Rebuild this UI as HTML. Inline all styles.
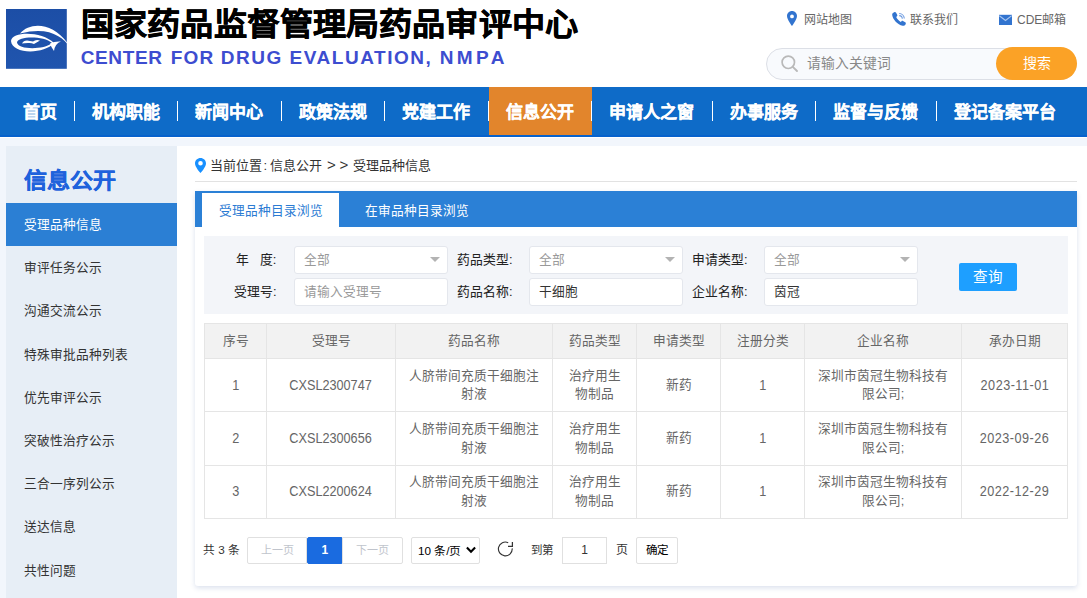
<!DOCTYPE html>
<html lang="zh-CN">
<head>
<meta charset="utf-8">
<style>
*{margin:0;padding:0;box-sizing:border-box}
html,body{width:1087px;height:598px;overflow:hidden;background:#fff;font-family:"Liberation Sans",sans-serif;color:#333}
.abs{position:absolute}
#hdr{position:absolute;left:0;top:0;width:1087px;height:87px;background:#fff}
#logo{position:absolute;left:6px;top:9px;width:61px;height:60px;background:#1d4fa6}
#t1{position:absolute;left:81px;top:5.8px;transform-origin:0 0;transform:scale(1.004,0.94);font-size:33px;font-weight:bold;color:#000;-webkit-text-stroke:0.6px #000;white-space:nowrap;line-height:40px}
.t2{position:absolute;top:47px;font-size:19px;font-weight:bold;color:#3d4dd0;white-space:nowrap;line-height:22px}
.tl{position:absolute;top:12px;font-size:12px;color:#666;line-height:16px;white-space:nowrap}
#search{position:absolute;left:766px;top:48px;width:311px;height:32px;border:1px solid #dcdfe6;border-radius:16px;background:#f8fafd}
#sbtn{position:absolute;left:996px;top:47px;width:81px;height:33px;border-radius:17px;background:#fba226;color:#fff;font-size:14px;line-height:33px;text-align:center}
#nav{position:absolute;left:0;top:87px;width:1087px;height:50px;background:#0e6bc8;border-bottom:2px solid #0762cc}
#nav .it{position:absolute;top:0;height:48px;line-height:52px;color:#fff;font-size:17px;font-weight:bold;padding:0 17px;white-space:nowrap;-webkit-text-stroke:0.2px #fff}
#nav .sep{position:absolute;top:14px;width:1px;height:20px;background:#fff}
#nav .act{background:#e2852c}
#bg{position:absolute;left:0;top:138px;width:1087px;height:460px;background:#f2f6fc;border-top:0}
#side{position:absolute;left:6px;top:146px;width:171px;height:452px;background:#e7eef6}
#side h2{position:absolute;left:18px;top:165px;font-size:23px;color:#2366d8;font-weight:bold;line-height:30px}
.si{position:absolute;left:6px;width:171px;height:43px;font-size:12.7px;color:#333;line-height:45px;padding-left:18px;white-space:nowrap}
.si.on{background:#2b7fd4;color:#fff}
#main{position:absolute;left:177px;top:146px;width:910px;height:452px;background:#fff}
#card{position:absolute;left:195px;top:191px;width:882px;height:395px;background:#fff;border-radius:3px;box-shadow:0 2px 5px rgba(40,80,150,.17)}
.lab{position:absolute;font-size:12.8px;color:#222;line-height:28px;white-space:nowrap;-webkit-text-stroke:0.05px #222}
.inp{position:absolute;width:153.5px;height:28.7px;background:#fff;border:1px solid #e4e7ed;border-radius:3px;font-size:12.7px;color:#333;line-height:27px;padding-left:9px;white-space:nowrap}
.inp.sel,.inp.ph{color:#999}
.inp.sel:after{content:"";position:absolute;left:134.5px;top:10.5px;width:0;height:0;border-left:5px solid transparent;border-right:5px solid transparent;border-top:5px solid #b3b3b3}
#tb{position:absolute;left:204px;top:323px;width:863px;border-collapse:collapse;table-layout:fixed}
#tb td{border:1px solid #e5e5e5;text-align:center;font-size:12.7px;color:#666;height:53.2px;line-height:18.7px;padding:0 10px}
#tb tr.hd td{height:35.3px;background:#f2f2f2}
.pg{font-size:12px;color:#333;line-height:18px;white-space:nowrap}
.pbox{top:537px;height:27px;border:1px solid #e0e0e0;font-size:12px;line-height:25px;text-align:center;white-space:nowrap;background:#fff}
.bc{position:absolute;top:157px;font-size:13px;color:#333;line-height:18px;white-space:nowrap}
.lt{display:inline-block;font-size:14px;transform:scaleX(.905)}
</style>
</head>
<body>
<div id="hdr">
  <svg class="abs" style="left:0;top:0" width="80" height="80" viewBox="0 0 80 80">
<defs><linearGradient id="lg" x1="0" y1="0" x2="0" y2="1"><stop offset="0" stop-color="#1c4ea6"/><stop offset="1" stop-color="#2055ae"/></linearGradient></defs>
<rect x="6" y="9" width="60.8" height="59.8" fill="url(#lg)"/>
<path d="M20,33.5 C30,22 52,22 67.5,43 L70,47 C62,36 48,26 20,33.5 Z" fill="#fff"/>
<path fill="#fff" fill-rule="evenodd" d="M11,41 C12,31 42,31 54,43 C44,54.5 12,54.5 11,41 Z M17,42.5 C18,35.8 44,35.8 52,43 C44,50 18,50 17,42.5 Z"/>
<path fill="#fff" d="M50,43.5 Q55,41 61,41.5 Q55,43.5 54,51 Q51,47 50,43.5 Z"/>
<path fill="#fff" d="M22,43.5 Q24,39.5 30,41 L33,41.5 Q36,39 40,40.5 Q37,42 34,44 Q31,42.5 28,43 Q24,43 22,43.5 Z"/>
</svg>
  <div id="t1">国家药品监督管理局药品审评中心</div>
  <div class="t2" style="left:80.7px;letter-spacing:.64px">CENTER</div><div class="t2" style="left:170.8px;letter-spacing:1.2px">FOR</div><div class="t2" style="left:220.8px;letter-spacing:1.53px">DRUG</div><div class="t2" style="left:289.5px;letter-spacing:1.54px">EVALUATION,</div><div class="t2" style="left:439.7px;letter-spacing:3.4px">NMPA</div>
<svg class="abs" style="left:786px;top:10px" width="12" height="17" viewBox="0 0 12 17"><path d="M6 1C3.2 1 1 3.2 1 6c0 3.6 5 10 5 10s5-6.4 5-10C11 3.2 8.8 1 6 1zm0 7.3a1.9 1.9 0 1 1 0-3.8 1.9 1.9 0 0 1 0 3.8z" fill="#3274cf"/></svg>
<svg class="abs" style="left:891px;top:11px" width="16" height="16" viewBox="0 0 16 16"><path d="M3.2 1.2 C2 1.6 1 2.6 1.2 4 C1.8 8.6 6.5 13.6 11.6 14.8 C12.8 15 14 14.3 14.6 13.2 L14.8 12.6 C15 12 14.7 11.5 14.2 11.2 L12 10 C11.5 9.7 10.9 9.8 10.5 10.2 L9.8 11 C8 10 6 7.8 5.2 6 L6 5.3 C6.4 4.9 6.5 4.3 6.2 3.8 L5.1 1.7 C4.8 1.2 4.2 1 3.6 1.1 Z" fill="#3274cf"/><path d="M8.2 2.5 A5.3 5.3 0 0 1 13.3 7.6" stroke="#6d9be0" stroke-width="1.1" fill="none"/><path d="M8.2 4.6 A3.2 3.2 0 0 1 11.3 7.8" stroke="#6d9be0" stroke-width="1.1" fill="none"/></svg>
<svg class="abs" style="left:999px;top:14px" width="14" height="12" viewBox="0 0 14 12"><rect x="0" y="0.8" width="13" height="10.2" fill="#3274cf"/><path d="M0.3 1.6 L6.5 6.4 L12.7 1.6" stroke="#a9c6f0" stroke-width="1.2" fill="none"/></svg>
  <div class="tl" style="left:804px">网站地图</div>
  <div class="tl" style="left:910px">联系我们</div>
  <div class="tl" style="left:1017px">CDE邮箱</div>
  <div id="search"></div>
  <svg class="abs" style="left:780px;top:54px" width="19" height="19" viewBox="0 0 19 19"><circle cx="8.3" cy="8.3" r="6.2" stroke="#b9b9b9" stroke-width="1.7" fill="none"/><path d="M12.8 12.8 L17 17" stroke="#b9b9b9" stroke-width="1.9" stroke-linecap="round"/></svg>
<div class="abs" style="left:806.5px;top:55px;font-size:13.8px;color:#888;line-height:18px">请输入关键词</div>
  <div id="sbtn">搜索</div>
</div>
<div id="nav">
  <div class="it" style="left:6px">首页</div>
  <div class="sep" style="left:74px"></div>
  <div class="it" style="left:75px">机构职能</div>
  <div class="sep" style="left:177px"></div>
  <div class="it" style="left:178px">新闻中心</div>
  <div class="sep" style="left:281px"></div>
  <div class="it" style="left:282px">政策法规</div>
  <div class="sep" style="left:384px"></div>
  <div class="it" style="left:385px">党建工作</div>
  <div class="sep" style="left:488px"></div>
  <div class="it act" style="left:489px;padding-right:18px">信息公开</div>
  <div class="sep" style="left:591px"></div>
  <div class="it" style="left:592px">申请人之窗</div>
  <div class="sep" style="left:712px"></div>
  <div class="it" style="left:713px">办事服务</div>
  <div class="sep" style="left:815px"></div>
  <div class="it" style="left:816px">监督与反馈</div>
  <div class="sep" style="left:936px"></div>
  <div class="it" style="left:937px">登记备案平台</div>
</div>
<div id="bg"></div>
<div id="side"></div>
<div class="abs" style="left:24px;top:165.7px;font-size:23px;color:#1f62dc;font-weight:bold;line-height:30px;-webkit-text-stroke:0.4px #1f62dc;transform:scaleY(.92)">信息公开</div>
<div class="si on" style="top:203px">受理品种信息</div>
<div class="si" style="top:246.2px">审评任务公示</div>
<div class="si" style="top:289.4px">沟通交流公示</div>
<div class="si" style="top:332.6px">特殊审批品种列表</div>
<div class="si" style="top:375.8px">优先审评公示</div>
<div class="si" style="top:419px">突破性治疗公示</div>
<div class="si" style="top:462.2px">三合一序列公示</div>
<div class="si" style="top:505.4px">送达信息</div>
<div class="si" style="top:548.6px">共性问题</div>

<div id="main"></div>
<svg class="abs" style="left:195px;top:158px" width="11" height="15" viewBox="0 0 11 15"><path d="M5.5 0C2.5 0 0 2.4 0 5.4c0 3.6 5.5 9.6 5.5 9.6S11 9 11 5.4C11 2.4 8.5 0 5.5 0zm0 7.6a2.3 2.3 0 1 1 0-4.6 2.3 2.3 0 0 1 0 4.6z" fill="#1890ff"/></svg>
<div class="bc" style="left:210px">当前位置</div><div class="bc" style="left:263.5px">:</div><div class="bc" style="left:270px">信息公开</div><div class="bc" style="left:327px;font-size:15px;top:156px">&gt;</div><div class="bc" style="left:339.5px;font-size:15px;top:156px">&gt;</div><div class="bc" style="left:353px">受理品种信息</div>
<div class="abs" style="left:195px;top:181px;width:882px;height:1px;background:#e2e2e2"></div>
<div id="card"></div>
<div class="abs" style="left:195px;top:191px;width:882px;height:36px;background:#2b80d6"></div>
<div class="abs" style="left:202px;top:193px;width:137px;height:34px;background:#fff;color:#2b7bd3;font-size:12.7px;line-height:37px;text-align:center">受理品种目录浏览</div>
<div class="abs" style="left:339px;top:193px;width:156px;height:34px;color:#fff;font-size:12.7px;line-height:37px;text-align:center">在审品种目录浏览</div>
<div class="abs" style="left:204px;top:236px;width:864px;height:78px;background:#f3f5f9"></div>
<div class="lab" style="left:236px;top:246px">年 &nbsp;&nbsp;度:</div>
<div class="lab" style="left:234px;top:278px">受理号:</div>
<div class="lab" style="left:457px;top:246px">药品类型:</div>
<div class="lab" style="left:457px;top:278px">药品名称:</div>
<div class="lab" style="left:692px;top:246px">申请类型:</div>
<div class="lab" style="left:692px;top:278px">企业名称:</div>
<div class="inp sel" style="left:294px;top:245.5px">全部</div>
<div class="inp ph" style="left:294px;top:277.5px">请输入受理号</div>
<div class="inp sel" style="left:529px;top:245.5px">全部</div>
<div class="inp" style="left:529px;top:277.5px">干细胞</div>
<div class="inp sel" style="left:764px;top:245.5px">全部</div>
<div class="inp" style="left:764px;top:277.5px">茵冠</div>
<div class="abs" style="left:959px;top:263px;width:58px;height:28px;background:#1e9fff;border-radius:2px;color:#fff;font-size:14.6px;line-height:29px;text-align:center">查询</div>
<table id="tb">
<colgroup><col style="width:62px"><col style="width:129px"><col style="width:157px"><col style="width:84px"><col style="width:84px"><col style="width:84px"><col style="width:157px"><col style="width:106px"></colgroup>
<tr class="hd"><td>序号</td><td>受理号</td><td>药品名称</td><td>药品类型</td><td>申请类型</td><td>注册分类</td><td>企业名称</td><td>承办日期</td></tr>
<tr><td><span class="lt">1</span></td><td><span class="lt">CXSL2300747</span></td><td>人脐带间充质干细胞注射液</td><td>治疗用生物制品</td><td>新药</td><td><span class="lt">1</span></td><td>深圳市茵冠生物科技有限公司;</td><td><span class="lt" style="letter-spacing:.52px">2023-11-01</span></td></tr>
<tr><td><span class="lt">2</span></td><td><span class="lt">CXSL2300656</span></td><td>人脐带间充质干细胞注射液</td><td>治疗用生物制品</td><td>新药</td><td><span class="lt">1</span></td><td>深圳市茵冠生物科技有限公司;</td><td><span class="lt" style="letter-spacing:.52px">2023-09-26</span></td></tr>
<tr><td><span class="lt">3</span></td><td><span class="lt">CXSL2200624</span></td><td>人脐带间充质干细胞注射液</td><td>治疗用生物制品</td><td>新药</td><td><span class="lt">1</span></td><td>深圳市茵冠生物科技有限公司;</td><td><span class="lt" style="letter-spacing:.52px">2022-12-29</span></td></tr>
</table>
<div class="abs pg" style="left:203px;top:541px;font-size:11.7px">共 3 条</div>
<div class="abs pbox" style="left:247px;width:60px;color:#c0c4cc;font-size:11px;border-radius:2px 0 0 2px">上一页</div>
<div class="abs pbox" style="left:307px;width:36px;background:#1a6be0;border-color:#1a6be0;color:#fff;border-radius:2px;font-weight:bold;width:35.5px">1</div>
<div class="abs pbox" style="left:342px;width:61px;color:#c0c4cc;font-size:11px;border-radius:0 2px 2px 0">下一页</div>
<div class="abs pbox" style="left:411px;width:69px;color:#000;text-align:left;padding-left:6px;border-radius:2px;font-size:11.7px">10 条/页</div>
<svg class="abs" style="left:460px;top:538px" width="60" height="24" viewBox="460 538 60 24"><path d="M466.9 547.6 L471 551.8 L475.1 547.6" stroke="#000" stroke-width="2.1" fill="none"/><path d="M508.2 542.7 A6.9 6.9 0 1 0 512.19 548.4" stroke="#333" stroke-width="1.15" fill="none"/><path d="M508 546.4 L512.4 546.4 L512.4 542" stroke="#333" stroke-width="1.25" fill="none"/></svg>
<div class="abs pg" style="left:531px;top:541px;font-size:11.5px">到第</div>
<div class="abs pbox" style="left:562px;width:45px;color:#333">1</div>
<div class="abs pg" style="left:616px;top:541px">页</div>
<div class="abs pbox" style="left:636px;width:42px;color:#000;font-size:11.5px;border-radius:2px">确定</div>
</body>
</html>
